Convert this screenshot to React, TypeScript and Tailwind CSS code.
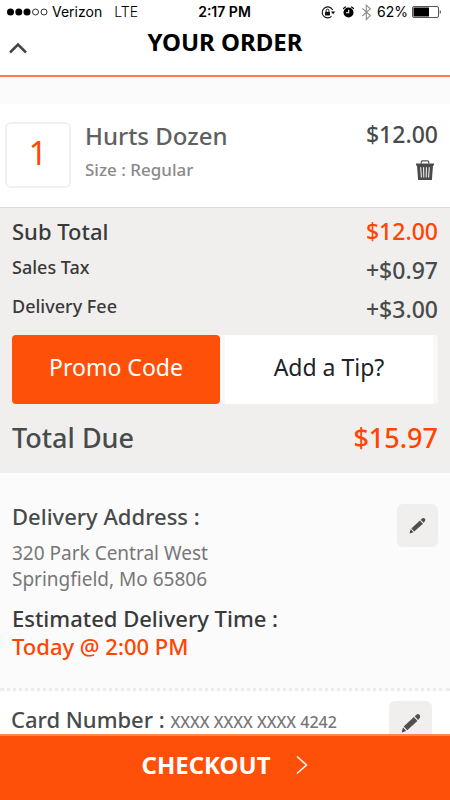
import { useState } from "react";

interface IconProps {
  className?: string;
}

const StatusIcons = () => (
  <svg width="52" height="18" viewBox="0 0 52 18" fill="none" aria-hidden="true">
    {/* rotation lock */}
    <path d="M11.700 7A5.500 5.500 0 1 0 10.500 13.400" stroke="#111" strokeWidth="1.100" />
    <path d="M9.900 8.400h4.400l-2.200 2.800z" fill="#111" />
    <rect x="4" y="8.800" width="5" height="3.600" rx=".5" fill="#111" />
    <path d="M5.100 8.800V7.500a1.400 1.400 0 0 1 2.800 0v1.300" stroke="#111" strokeWidth="1" />
    {/* alarm */}
    <circle cx="27.500" cy="9.500" r="5" fill="#000" />
    <path d="M22.400 6.200a3 3 0 0 1 2.600-2.400M32.600 6.200A3 3 0 0 0 30 3.800" stroke="#000" strokeWidth="1.300" />
    <path d="M27.700 6.800v3h-2.700" stroke="#fff" strokeWidth="1.100" />
    {/* bluetooth */}
    <path d="M41.300 5.400l8 7.200-4 3.800V2.200l4 3.600-8 7.200" stroke="#8c8c8c" strokeWidth="1.100" />
  </svg>
);

const Battery = () => (
  <svg width="30" height="12" viewBox="0 0 30 12" fill="none" aria-hidden="true">
    <rect x=".5" y=".5" width="26" height="11" rx="1.500" stroke="#555" />
    <rect x="1.500" y="1.500" width="15.500" height="9" fill="#000" />
    <path d="M27.800 4v4c1.200-.4 1.200-3.600 0-4z" fill="#000" />
  </svg>
);

const Trash = () => (
  <svg width="18" height="20" viewBox="0 0 18 20" fill="none" aria-hidden="true">
    <path d="M5.300 3.500V1.800q0-.9.900-.9h5.600q.9 0 .9.900v1.700" stroke="#555" strokeWidth="1.200" />
    <path d="M0 3.400h18v2H17L15.900 20H2.100L1 5.400H0z" fill="#4a4a4a" />
    <path d="M4.700 7.200l.7 10.300M7.600 7.200l.2 10.300M10.400 7.200l-.2 10.300M13.300 7.200l-.7 10.300" stroke="#fff" strokeWidth="1" />
  </svg>
);

const Pencil = ({ className }: IconProps) => (
  <svg className={className} viewBox="0 0 20 20" aria-hidden="true">
    <path d="M.6 19.400l1.400-5 3.200 3.500z" fill="#444" />
    <path d="M2.700 13.400L12.900 4l3.500 3.900L6.200 17.200z" fill="#505050" />
    <path d="M13.700 3.300l2-1.800q1.500-1.100 2.900.4 1.300 1.600.1 3L17.100 6.900z" fill="#505050" />
  </svg>
);

const App = () => {
  const [quantity] = useState(1);

  return (
    <div className="flex h-screen flex-col bg-white font-['Noto_Sans','Open_Sans',sans-serif] text-[#484b4b]">
      <header className="shrink-0 border-b-2 border-[#ff7a45]">
        <div className="grid h-6 grid-cols-[1fr_auto_1fr] items-center pr-2 pl-[7px] font-['Inter',sans-serif] text-sm text-black">
          <div className="flex items-center">
            <svg width="41" height="8" viewBox="0 0 41 8" aria-hidden="true">
              <circle cx="3.500" cy="4" r="3.500" />
              <circle cx="11.800" cy="4" r="3.500" />
              <circle cx="20" cy="4" r="3.500" />
              <circle cx="28.500" cy="4" r="3" fill="none" stroke="#333" />
              <circle cx="37" cy="4" r="3" fill="none" stroke="#333" />
            </svg>
            <span className="ml-1">Verizon</span>
            <span className="ml-3 font-light">LTE</span>
          </div>
          <span className="font-semibold">2:17 PM</span>
          <div className="flex items-center justify-end">
            <StatusIcons />
            <span className="mx-1">62%</span>
            <Battery />
          </div>
        </div>
        <div className="grid h-[51px] grid-cols-[36px_1fr_36px] items-start">
          <button type="button" aria-label="Close order" className="flex h-12 items-center justify-center">
            <svg width="20" height="12" viewBox="0 0 20 12" fill="none" aria-hidden="true">
              <path d="M2 10.500l8-8 8 8" stroke="#444" strokeWidth="2.500" />
            </svg>
          </button>
          <h1 className="text-center text-2xl leading-9 font-bold text-black">YOUR ORDER</h1>
        </div>
      </header>

      <main className="min-h-0 flex-1 overflow-y-auto bg-[#fbfbfb] [scrollbar-width:none]">
        <section className="mt-[27px] flex h-[104px] border-b border-[#dcdcdc] bg-white pt-[18px] pr-3 pl-[5px]">
          <div className="flex h-[66px] w-[66px] items-center justify-center rounded-md border-2 border-[#f0f0f0] pb-1 text-[32px] text-[#ff4500]">
            {quantity}
          </div>
          <div className="ml-[14px] flex-1">
            <h2 className="text-2xl leading-7 font-medium text-[#606060]">Hurts Dozen</h2>
            <p className="mt-1 text-[17px] leading-8 font-medium text-[#8a8a8a]">Size : Regular</p>
          </div>
          <div className="flex flex-col items-end">
            <span className="text-[23px] leading-6 font-medium">$12.00</span>
            <button type="button" aria-label="Remove item" className="mt-3.5 mr-1">
              <Trash />
            </button>
          </div>
        </section>

        <section className="bg-[#f0efee] px-3 pt-1">
          <dl className="text-[23px] leading-[38px] font-medium">
            <div className="flex h-[39px] items-start justify-between">
              <dt className="text-[22px] text-[#3a3a3a]">Sub Total</dt>
              <dd className="text-[#ff4500]">$12.00</dd>
            </div>
            <div className="flex h-[39px] items-start justify-between">
              <dt className="text-lg leading-8 text-[#3a3a3a]">Sales Tax</dt>
              <dd>+$0.97</dd>
            </div>
            <div className="flex h-[39px] items-start justify-between">
              <dt className="text-lg leading-8 text-[#3a3a3a]">Delivery Fee</dt>
              <dd>+$3.00</dd>
            </div>
          </dl>
          <div className="mt-1.5 grid grid-cols-2 gap-[5px] rounded-sm bg-[#f8f8f8] pr-[5px] text-[23px]">
            <button type="button" className="h-[69px] rounded-sm bg-[#ff500a] pb-1 text-white">
              Promo Code
            </button>
            <button type="button" className="h-[69px] bg-white pb-1 text-[#222]">
              Add a Tip?
            </button>
          </div>
          <div className="flex h-[69px] items-center justify-between text-[27px] font-medium">
            <span>Total Due</span>
            <span className="text-[#ff4500]">$15.97</span>
          </div>
        </section>

        <section className="flex h-[218px] justify-between border-b-[3px] border-dotted border-[#ebebeb] px-3 pt-[31px]">
          <div>
            <h2 className="text-[22px] leading-6 font-medium">Delivery Address :</h2>
            <address className="mt-3 text-[19px] leading-[26px] text-[#777] not-italic">
              320 Park Central West
              <br />
              Springfield, Mo 65806
            </address>
            <h2 className="mt-3 text-[22px] leading-7 font-medium text-[#3a3a3a]">Estimated Delivery Time :</h2>
            <p className="text-[22px] leading-7 font-medium text-[#ff4500]">Today @ 2:00 PM</p>
          </div>
          <button
            type="button"
            aria-label="Edit delivery address"
            className="flex h-[43px] w-[41px] shrink-0 items-center justify-center rounded-md bg-[#f0efee]"
          >
            <Pencil className="h-[17px] w-[17px]" />
          </button>
        </section>

        <section className="flex h-16 justify-between bg-white pt-2.5 pr-[18px] pl-[11px]">
          <h2 className="text-[22px] leading-9 font-medium">
            Card Number : <span className="text-base text-[#777]">XXXX XXXX XXXX 4242</span>
          </h2>
          <button
            type="button"
            aria-label="Edit card number"
            className="flex h-[43px] w-[43px] shrink-0 items-center justify-center rounded-md bg-[#f0efee]"
          >
            <Pencil className="h-5 w-5" />
          </button>
        </section>
      </main>

      <button
        type="button"
        className="flex h-[66px] shrink-0 items-center justify-center border-t-2 border-[#ff8355] bg-[#ff500a] pb-1.5 text-2xl font-bold text-white"
      >
        CHECKOUT
        <svg className="ml-6" width="14" height="20" viewBox="0 0 14 20" fill="none" aria-hidden="true">
          <path d="M2 1.500l9.500 8.500L2 18.500" stroke="#fff" strokeWidth="1.500" />
        </svg>
      </button>
    </div>
  );
};

export default App;
